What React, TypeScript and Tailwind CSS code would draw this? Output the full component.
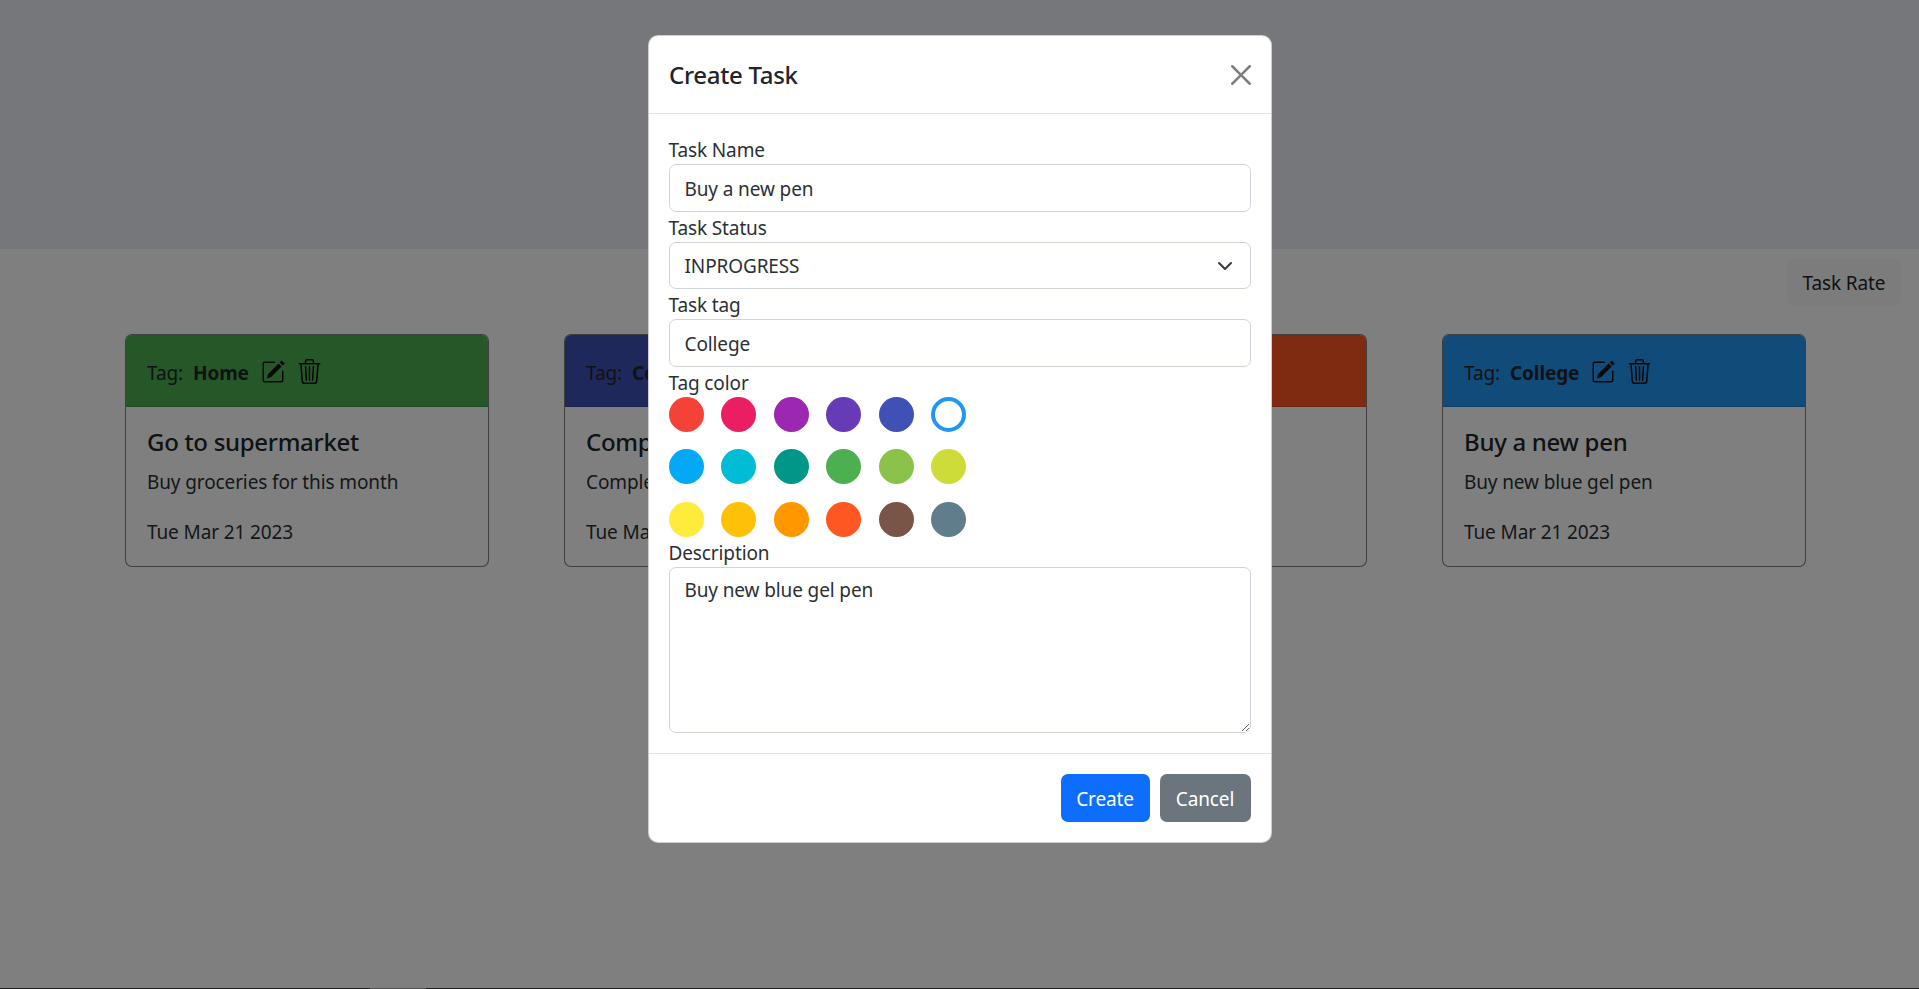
import { BsPencilSquare, BsTrash3 } from 'react-icons/bs'

const CARDS = [
  { tag: 'Home', head: 'bg-[#4caf50]', title: 'Go to supermarket', desc: 'Buy groceries for this month' },
  { tag: 'College', head: 'bg-[#3f51b5]', title: 'Complete assignment', desc: 'Complete the maths assignment' },
  { tag: 'Work', head: 'bg-[#ff5722]', title: 'Send the report', desc: 'Send the weekly report' },
  { tag: 'College', head: 'bg-[#2196f3]', title: 'Buy a new pen', desc: 'Buy new blue gel pen' },
]

const SWATCHES = [
  'bg-[#f44336]', 'bg-[#e91e63]', 'bg-[#9c27b0]', 'bg-[#673ab7]', 'bg-[#3f51b5]', 'border-[4px] border-[#2196f3]',
  'bg-[#03a9f4]', 'bg-[#00bcd4]', 'bg-[#009688]', 'bg-[#4caf50]', 'bg-[#8bc34a]', 'bg-[#cddc39]',
  'bg-[#ffeb3b]', 'bg-[#ffc107]', 'bg-[#ff9800]', 'bg-[#ff5722]', 'bg-[#795548]', 'bg-[#607d8b]',
]

const FIELD = 'block w-full rounded-[7px] border border-[#ced4da] px-[15px] text-[#2b3035] bg-white outline-none'
const LABEL = 'block h-[30px] pt-[1px] leading-[30px] text-[#2b3035]'

function TaskCard({ tag, head, title, desc }: (typeof CARDS)[number]) {
  return (
    <div className="w-[364px] h-[233px] shrink-0 rounded-[7px] border border-[#00000080] overflow-hidden bg-white">
      <div className={`h-[72px] flex items-center pl-[21px] pr-[20px] border-b border-[#00000020] ${head}`}>
        <span className="mt-[5px] text-[#212529]">Tag:</span>
        <b className="mt-[5px] ml-[10px] font-bold text-[#212529]">{tag}</b>
        <BsPencilSquare className="mt-[2px] ml-[12px] w-[24px] h-[24px] text-[#111]" />
        <BsTrash3 className="mt-[2px] ml-[12px] w-[25px] h-[25px] text-[#111]" />
      </div>
      <div className="pl-[21px] pr-[20px] pt-[20px]">
        <div className="text-[24px] leading-[29px] font-medium tracking-[-0.3px] text-[#212529]">{title}</div>
        <div className="mt-[11px] text-[#2b3035] leading-[30px]">{desc}</div>
        <div className="mt-[20px] text-[#2b3035] leading-[30px]">Tue Mar 21 2023</div>
      </div>
    </div>
  )
}

export default function App() {
  return (
    <div className="relative h-[989px] overflow-hidden flex flex-col bg-white font-['Noto_Sans',sans-serif] text-[19px] tracking-[-0.12px] text-[#212529]">
      <div className="h-[249px] shrink-0 bg-[#eceef7]" />
      <div className="flex justify-end pt-[9px] pr-[18px]">
        <button className="h-[48px] w-[114px] pt-[3px] rounded-[7px] bg-[#f8f9fa] text-[#212529]">Task Rate</button>
      </div>
      <div className="flex gap-[75px] pl-[125px] pt-[28px]">
        {CARDS.map((c, i) => (
          <TaskCard key={i} {...c} />
        ))}
      </div>
      {/* 1px strip along the bottom edge of the window */}
      <div className="mt-auto h-[1px] flex">
        <div className="w-[370px] bg-[#444]" />
        <div className="w-[56px] bg-[#aaa]" />
        <div className="flex-1 bg-[#444]" />
      </div>

      {/* modal, over a half black backdrop */}
      <div className="absolute inset-0 bg-black/50 flex justify-center items-start pt-[35px]">
        <div className="w-[624px] h-[808px] rounded-[10px] border border-[#00000033] bg-white flex flex-col">
          <div className="h-[78px] shrink-0 flex items-center justify-between pl-[20.5px] pr-[20px] border-b border-[#dee2e6]">
            <div className="text-[24px] font-medium tracking-[-0.3px]">Create Task</div>
            <svg viewBox="0 0 16 16" className="w-[20px] h-[20px] text-black opacity-50" fill="currentColor">
              <path d="M.293.293a1 1 0 0 1 1.414 0L8 6.586 14.293.293a1 1 0 1 1 1.414 1.414L9.414 8l6.293 6.293a1 1 0 0 1-1.414 1.414L8 9.414l-6.293 6.293a1 1 0 0 1-1.414-1.414L6.586 8 .293 1.707a1 1 0 0 1 0-1.414z" />
            </svg>
          </div>
          <div className="flex-1 px-[20px] pt-[20px]">
            <label className={LABEL}>Task Name</label>
            <input className={`${FIELD} h-[48px] pt-[2px]`} defaultValue="Buy a new pen" />
            <label className={LABEL}>Task Status</label>
            <div className={`${FIELD} h-[47px] flex items-center justify-between`}>
              <span className="pt-[2px]">INPROGRESS</span>
              <svg viewBox="0 0 16 16" className="w-[16px] h-[16px] mr-[2px]" fill="none" stroke="#343a40" strokeWidth="2" strokeLinecap="round" strokeLinejoin="round">
                <path d="m2 5 6 6 6-6" />
              </svg>
            </div>
            <label className={LABEL}>Task tag</label>
            <input className={`${FIELD} h-[48px] pt-[2px]`} defaultValue="College" />
            <label className={LABEL}>Tag color</label>
            <div className="flex flex-wrap w-[316px] gap-x-[17.5px] gap-y-[17.25px]">
              {SWATCHES.map((s) => (
                <span key={s} className={`w-[35px] h-[35px] rounded-full ${s}`} />
              ))}
            </div>
            <label className={LABEL}>Description</label>
            <textarea className={`${FIELD} h-[166px] pt-[8px]`} defaultValue="Buy new blue gel pen" />
          </div>
          <div className="h-[89px] shrink-0 flex items-start justify-end gap-[10px] px-[20px] pt-[20px] border-t border-[#dee2e6]">
            <button className="h-[48px] w-[89px] pt-[2px] rounded-[7px] bg-[#0d6efd] text-white">Create</button>
            <button className="h-[48px] w-[91px] pt-[2px] rounded-[7px] bg-[#6c757d] text-white">Cancel</button>
          </div>
        </div>
      </div>
    </div>
  )
}
